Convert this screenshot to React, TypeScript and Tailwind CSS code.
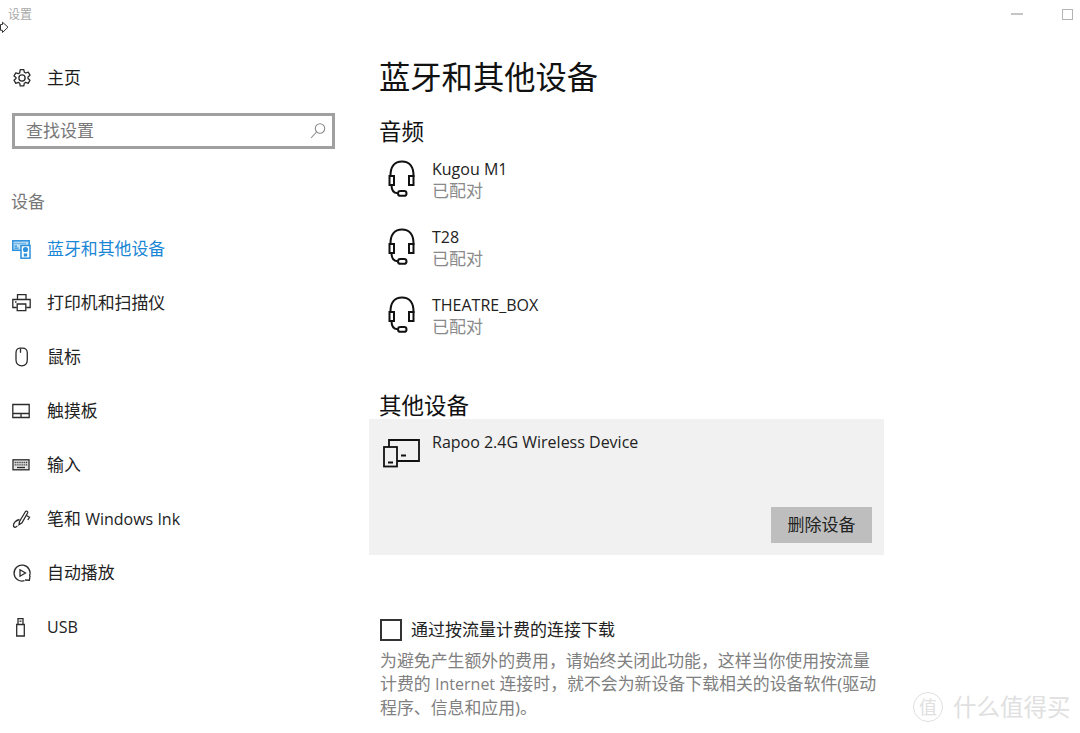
import React from "react";

function Ico({ children, w = 20, h = 20, color = "#2b2b2b", sw = 1.3 }: { children: React.ReactNode; w?: number; h?: number; color?: string; sw?: number }) {
  return (
    <svg width={w} height={h} viewBox={`0 0 ${w} ${h}`} fill="none" stroke={color} strokeWidth={sw} className="block shrink-0">
      {children}
    </svg>
  );
}

const Gear = () => (
  <Ico>
    <path d="M8.200 1.600h3.600l.5 2.600 1.400.8 2.500-.9 1.800 3.100-2 1.700v1.600l2 1.700-1.800 3.100-2.500-.9-1.400.8-.5 2.600H8.200l-.5-2.600-1.400-.8-2.500.9-1.800-3.100 2-1.700V9.600l-2-1.700 1.800-3.100 2.500.9 1.400-.8z" strokeLinejoin="round" />
    <circle cx="10" cy="10" r="3.100" />
  </Ico>
);
const BlueTooth = () => (
  <Ico color="#2b8fdc" sw={1.5}>
    <rect x="0.800" y="1.800" width="16.400" height="9.500" fill="#bfe0f6" />
    <path d="M2.500 4.500h12" strokeDasharray="1 1" strokeWidth="1.300" />
    <path d="M2.500 7.200h2.500M2.500 9.200h4" strokeWidth="1.200" />
    <rect x="9" y="6.500" width="9" height="12.700" fill="#fff" />
    <circle cx="13.500" cy="10.500" r="1.800" fill="#2b8fdc" />
    <rect x="11.800" y="14.500" width="3.400" height="3" fill="#2b8fdc" stroke="none" />
  </Ico>
);
const Printer = () => (
  <Ico>
    <path d="M5.500 6.500V1.700h8.500v4.800M4.800 14.500H.8V6.500h17.400v8h-4" />
    <path d="M5.200 11h8.600v6.700H5.200z" />
    <path d="M3 9h1.500" />
  </Ico>
);
const Mouse = () => (
  <Ico>
    <path d="M8 1.200h2.500c3 0 4.800 1.800 4.800 4.800v7c0 3.500-2.300 5.800-5.500 5.800S4 16.500 4 13V6c0-3 1.500-4.800 4-4.800z" />
    <path d="M8.500 1.500v4.300" />
  </Ico>
);
const Touchpad = () => (
  <Ico>
    <path d="M.8 3.500h16.400v13H.8zM.8 12.500h16.400M9 12.500v4" />
  </Ico>
);
const Keyboard = () => (
  <Ico>
    <rect x="1" y="4.800" width="16" height="10" fill="#e4e4e4" />
    <path d="M2.700 7.500h12.600M2.700 9.800h12.600" strokeDasharray="1.100 .8" strokeWidth="1.300" />
    <path d="M5 12.500h8" strokeWidth="1.300" />
  </Ico>
);
const Pen = () => (
  <Ico>
    <path d="M7.500 12.500l6-10c.8-1 2.700 0 2.200 1.300l-5.700 10-3 1.800z" />
    <path d="M14.500 6.500l3 1.800-1.700 2.700M7.500 10.500C3.500 11.500 1 14.500 1.500 17c.4 1.700 2.700 1.700 3.800-.3" />
  </Ico>
);
const AutoPlay = () => (
  <Ico>
    <path d="M12.500 17.700A8 8 0 1 1 17.500 13" />
    <path d="M8 6.800l5.500 3.200L8 13.200z" />
    <path d="M18 12.800l-.6 4.400-4.400-.2" />
  </Ico>
);
const Usb = () => (
  <Ico>
    <path d="M4.700 7.500V19h7.600V7.500zM6 7.500V1.700h5v5.800" />
    <path d="M7.500 4.200h2" />
  </Ico>
);
const Headset = () => (
  <svg width="30" height="38" viewBox="0 0 30 38" fill="none" stroke="#111" strokeWidth="2" className="block shrink-0">
    <path d="M3.500 17C3 6 8 1.500 15 1.500S27 6 26.500 17" />
    <rect x="2.500" y="16" width="4.500" height="9" fill="#fff" />
    <rect x="22" y="16" width="4.500" height="9" fill="#fff" />
    <path d="M4.500 25c0 5 1.500 8 6 8.300" />
    <rect x="11" y="31" width="8.500" height="4.800" rx="2.400" />
  </svg>
);
const Devices = () => (
  <svg width="38" height="30" viewBox="0 0 38 30" fill="none" stroke="#111" strokeWidth="1.800" className="block shrink-0">
    <path d="M6 9V2h30v21H14" />
    <rect x="1" y="9" width="13" height="19.500" />
    <path d="M5 24.500h5M18 17.500h5" strokeWidth="2" />
  </svg>
);

const L = ({ children }: { children: React.ReactNode }) => <span className="text-[16px]">{children}</span>;

const nav: [React.ReactNode, React.ReactNode, string, boolean?][] = [
  [<BlueTooth />, "蓝牙和其他设备", "bt", true],
  [<Printer />, "打印机和扫描仪", "pr"],
  [<Mouse />, "鼠标", "mo"],
  [<Touchpad />, "触摸板", "tp"],
  [<Keyboard />, "输入", "kb"],
  [<Pen />, <>笔和 <L>Windows Ink</L></>, "pen"],
  [<AutoPlay />, "自动播放", "ap"],
  [<Usb />, <L>USB</L>, "usb"],
];

const audio = ["Kugou M1", "T28", "THEATRE_BOX"];

export default function App() {
  return (
    <div className="relative w-[1080px] h-[733px] overflow-hidden bg-white text-[#1c1c1c] text-[17px] font-['Open_Sans','Noto_Sans_CJK_SC',sans-serif]">
      <div className="flex items-start justify-between h-[30px] pl-2 pt-[7px]">
        <span className="text-[12px] leading-4 text-[#a8a8a8]">设置</span>
        <div className="flex items-start">
          <div className="w-[12px] h-[2px] bg-[#c4c4c4] mt-[6px] mr-[39px]" />
          <div className="w-[11px] h-[11px] border border-[#b4b4b4] mt-[2px] mr-[7px]" />
        </div>
      </div>
      <div className="flex">
        <aside className="w-[380px] shrink-0 pl-3">
          <div className="flex items-center h-[32px] mt-[32px]">
            <Gear />
            <span className="ml-[15px] text-[16.900px]">主页</span>
          </div>
          <div className="flex items-center justify-between w-[323px] h-[36px] mt-[19px] border-[3px] border-[#a0a0a0] pl-[11px] pr-[5px]">
            <span className="text-[#777]">查找设置</span>
            <svg width="18" height="18" viewBox="0 0 18 18" fill="none" stroke="#8a8a8a" strokeWidth="1.100"><circle cx="11" cy="6.500" r="4.700" /><path d="M7.500 10L2 16" /></svg>
          </div>
          <div className="-ml-px mt-[41px] h-[24px] leading-6 text-[#777]">设备</div>
          <nav className="mt-[19px] flex flex-col gap-[22px]">
            {nav.map(([icon, label, key, active]) => (
              <div key={key} className={`flex items-center h-[32px] ${active ? "text-[#1a86d6]" : "text-[#222]"}`}>
                {icon}
                <span className="ml-[15px] text-[16.900px] whitespace-nowrap">{label}</span>
              </div>
            ))}
          </nav>
        </aside>
        <main className="w-[505px]">
          <h1 className="-ml-px text-[31.300px] leading-[40px] mt-[27px] text-[#111]">蓝牙和其他设备</h1>
          <h2 className="-ml-px text-[22.500px] leading-[30px] mt-[20px] text-[#111]">音频</h2>
          <div className="mt-[4px] flex flex-col gap-[16px]">
            {audio.map((name) => (
              <div key={name} className="flex h-[52px] pl-[7px]">
                <div className="mt-[9px]"><Headset /></div>
                <div className="ml-[15px] mt-[8px] leading-[21px] whitespace-nowrap">
                  <div className="text-[16px] text-[#222]">{name}</div>
                  <div className="text-[#8a8a8a]">已配对</div>
                </div>
              </div>
            ))}
          </div>
          <h2 className="-ml-px text-[22.500px] leading-[30px] mt-[52px] text-[#111]">其他设备</h2>
          <div className="-ml-[11px] w-[515px] h-[136px] mt-[-2px] bg-[#f1f1f1] pt-[12px] pl-[14px] pr-[12px]">
            <div className="flex">
              <div className="mt-[7px]"><Devices /></div>
              <span className="ml-[11px] leading-[22px] text-[16px] text-[#222] whitespace-nowrap">Rapoo 2.4G Wireless Device</span>
            </div>
            <div className="flex justify-end mt-[39px]">
              <div className="w-[101px] h-[36px] bg-[#bebebe] flex items-center justify-center text-[#222]">删除设备</div>
            </div>
          </div>
          <div className="flex items-center mt-[63px] h-[24px]">
            <div className="w-[22px] h-[22px] border-2 border-[#333]" />
            <span className="ml-[9px] text-[#222] whitespace-nowrap">通过按流量计费的连接下载</span>
          </div>
          <p className="mt-[7px] w-[500px] text-[16.900px] leading-[23px] text-[#808080]">
            为避免产生额外的费用，请始终关闭此功能，这样当你使用按流量计费的 <L>Internet</L> 连接时，就不会为新设备下载相关的设备软件(驱动程序、信息和应用)。
          </p>
        </main>
      </div>
      <svg className="absolute left-0 top-[21px]" width="9" height="13" viewBox="0 0 9 13" fill="#fff" stroke="#333" strokeWidth="1"><path d="M.5 3.500h2V1.200l5.500 5-5.500 5.300V9.300h-2z" /></svg>
      <div className="absolute left-[913px] top-[692px] flex items-center text-[#e0e0e0]">
        <div className="w-[30px] h-[30px] rounded-full border border-[#e0e0e0] flex items-center justify-center text-[18px]">值</div>
        <span className="ml-[10px] text-[23.500px] leading-[30px] whitespace-nowrap">什么值得买</span>
      </div>
    </div>
  );
}
